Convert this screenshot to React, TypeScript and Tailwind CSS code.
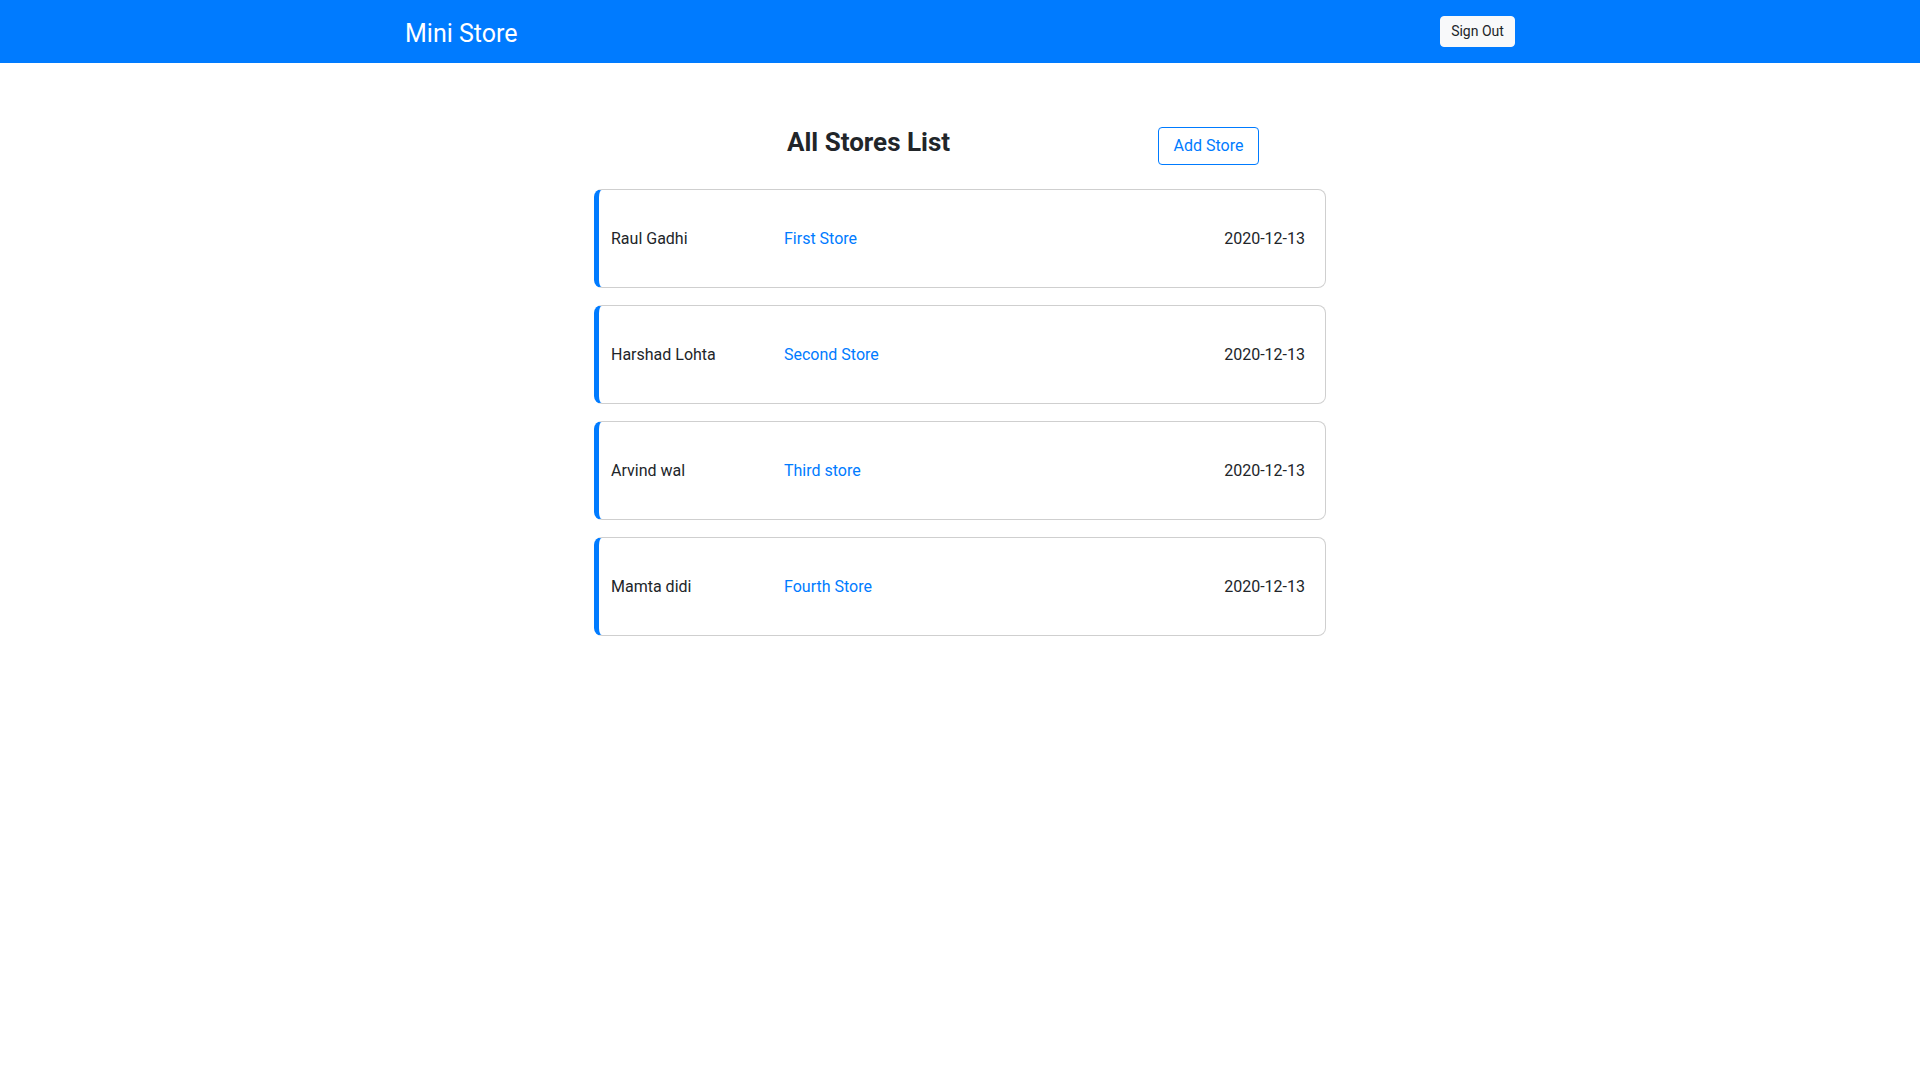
const stores = [
  { owner: "Raul Gadhi", name: "First Store", date: "2020-12-13" },
  { owner: "Harshad Lohta", name: "Second Store", date: "2020-12-13" },
  { owner: "Arvind wal", name: "Third store", date: "2020-12-13" },
  { owner: "Mamta didi", name: "Fourth Store", date: "2020-12-13" },
];

function Navbar() {
  return (
    <nav className="h-[63px] bg-[#007bff]">
      <div className="mx-auto flex h-full w-[1140px] items-center justify-between px-[15px]">
        <a href="#" className="pt-[3px] text-[25px] leading-none text-white">
          Mini Store
        </a>
        <button className="h-[31px] w-[75px] rounded-[4px] border border-[#f8f9fa] bg-[#f8f9fa] text-[14px] text-[#212529]">
          Sign Out
        </button>
      </div>
    </nav>
  );
}

function StoreCard({ owner, name, date }: { owner: string; name: string; date: string }) {
  return (
    <div className="flex h-[99px] items-center rounded-[8px] border border-l-[5px] border-[#cfcfcf] border-l-[#007bff] bg-white pl-[12px] pr-[20px] text-[16px]">
      <span className="w-[173px] text-[#212529]">{owner}</span>
      <a href="#" className="text-[#007bff]">
        {name}
      </a>
      <span className="ml-auto text-[#212529]">{date}</span>
    </div>
  );
}

export default function App() {
  return (
    <div className="min-h-screen bg-white font-['Roboto',sans-serif]">
      <Navbar />
      <main className="mx-auto w-[732px] pt-[60px]">
        <div className="flex h-[38px] items-start">
          <h3 className="ml-[193px] mt-[6px] text-[26px] font-bold leading-none text-[#212529]">All Stores List</h3>
          <button className="ml-auto mr-[67px] mt-[4px] h-[38px] w-[101px] rounded-[4px] border border-[#007bff] text-[16px] text-[#007bff]">
            Add Store
          </button>
        </div>
        <div className="mt-[28px] flex flex-col gap-[17px]">
          {stores.map((s) => (
            <StoreCard key={s.name} {...s} />
          ))}
        </div>
      </main>
    </div>
  );
}
